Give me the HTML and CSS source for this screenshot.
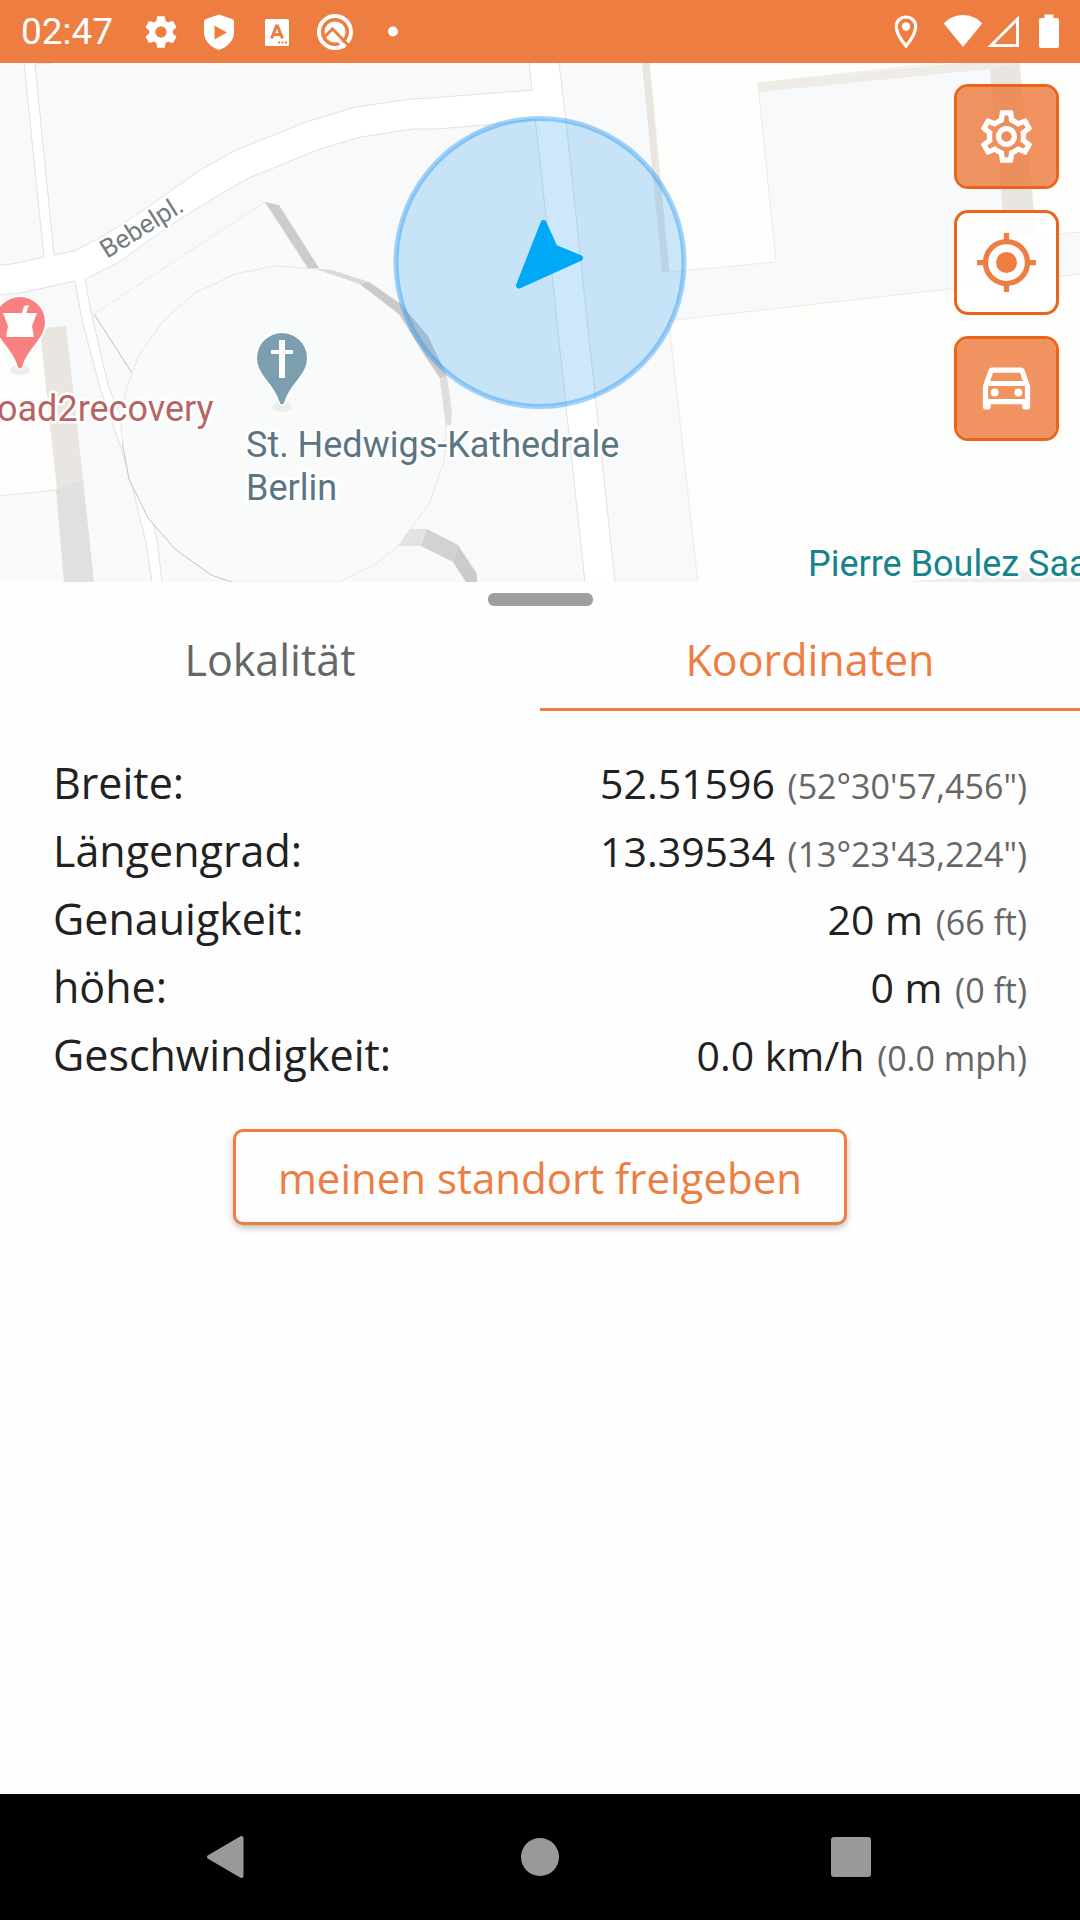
FILE: index.html
```html
<!DOCTYPE html>
<html lang="de">
<head>
    <meta charset="UTF-8">
    <meta name="viewport" content="width=device-width, initial-scale=1.0">
    <title>Koordinaten</title>
    <link rel="stylesheet" href="styles.css">
</head>
<body>
    <div class="status-bar">
        <span class="time">02:47</span>
        <div class="notifications">
            <svg width="38" height="38" viewBox="0 0 24 24"><path fill="#fff" fill-rule="evenodd" d="M19.43 12.98c.04-.32.07-.64.07-.98s-.03-.66-.07-.98l2.11-1.65c.19-.15.24-.42.12-.64l-2-3.46c-.12-.22-.39-.3-.61-.22l-2.49 1c-.52-.4-1.08-.73-1.69-.98l-.38-2.65C14.46 2.18 14.25 2 14 2h-4c-.25 0-.46.18-.49.42l-.38 2.65c-.61.25-1.17.59-1.69.98l-2.49-1c-.23-.09-.49 0-.61.22l-2 3.46c-.13.22-.07.49.12.64l2.11 1.65c-.04.32-.07.65-.07.98s.03.66.07.98l-2.11 1.65c-.19.15-.24.42-.12.64l2 3.46c.12.22.39.3.61.22l2.49-1c.52.4 1.08.73 1.69.98l.38 2.65c.03.24.24.42.49.42h4c.25 0 .46-.18.49-.42l.38-2.65c.61-.25 1.17-.59 1.69-.98l2.49 1c.23.09.49 0 .61-.22l2-3.46c.12-.22.07-.49-.12-.64l-2.11-1.65zM12 15.6a3.6 3.6 0 1 1 0-7.2 3.6 3.6 0 0 1 0 7.2z"/></svg>
            <svg width="38" height="38" viewBox="0 0 38 38"><path fill="#fff" fill-rule="evenodd" d="M19 1.500 32 6q2 .7 2 2.500v11C34 28 27 34 19 37 11 34 4 28 4 19.500v-11Q4 6.700 6 6zM14.500 12.500v14l12.500-7z"/></svg>
            <svg width="38" height="38" viewBox="0 0 38 38"><rect x="7" y="6" width="24" height="27" rx="1.500" fill="#fff"/><path fill="none" stroke="#ed7d41" stroke-width="3" d="m13.500 25.500 5-12.500h1l5 12.500M15.500 21.500h7"/><path fill="#ed7d41" d="M20 28.500h2v2h-2zm3.500 0h2v2h-2zm3.500 0h2v2h-2z"/></svg>
            <svg width="38" height="38" viewBox="0 0 38 38"><circle cx="19" cy="19" r="16" fill="none" stroke="#fff" stroke-width="4"/><circle cx="19" cy="19" r="10.500" fill="#fff"/><path fill="none" stroke="#ed7d41" stroke-width="3" d="M9 23.500l7.500-7.500L36 36"/><path fill="none" stroke="#fff" stroke-width="3.500" d="M15.500 19.500 29 34.500"/></svg>
            <svg width="38" height="38" viewBox="0 0 38 38"><circle cx="19" cy="18.500" r="5" fill="#fff"/></svg>
        </div>
        <div class="signals">
            <svg width="34" height="38" viewBox="-5 0 34 38"><path fill="none" stroke="#fff" stroke-width="3.200" d="M12 4C6.500 4 2.300 8.200 2.300 13.500 2.300 20 7 27 12 33c5-6 9.700-13 9.700-19.500C21.700 8.200 17.500 4 12 4z"/><circle cx="12" cy="13.500" r="4.200" fill="#fff"/></svg>
            <div class="network">
                <svg width="40" height="38" viewBox="0 0 40 38"><path fill="#fff" d="M20 34 .8 10.500C11-1 29-1 39.200 10.500z"/></svg>
                <svg width="32" height="38" viewBox="0 0 32 38"><path fill="none" stroke="#fff" stroke-width="3" d="M30.500 6v26.500H4z"/></svg>
            </div>
            <svg width="20" height="38" viewBox="0 0 20 38"><path fill="#fff" d="M5.500 1.500h9V5H18q2 0 2 2v26q0 2-2 2H2q-2 0-2-2V7q0-2 2-2h3.500z"/></svg>
        </div>
    </div>

    <div class="map">
        <svg class="map-canvas" viewBox="0 0 1080 519" preserveAspectRatio="xMidYMid slice">
            <rect width="1080" height="519" fill="#f8f9fb"/>
            <!-- buildings, left -->
            <path fill="#fdfdfb" d="M0 270 46 265 57 426 0 433z"/>
            <path fill="#f9fbfa" d="M0 433 57 426 64 519H0z"/>
            <path fill="none" stroke="#e8e3de" d="M0 433 57 427"/>
            <path fill="#e9e6e1" d="M41 278 46 265 66 263 83 416 57 427z"/>
            <path fill="#dfe1e0" d="M56 427 83 416 94 519H64z"/>
            <!-- buildings, right -->
            <path fill="#fdfdfb" stroke="#f0e9e2" d="M649-2H960L758 20 776 199 669 209z"/>
            <path fill="#fdfdfb" stroke="#f0e9e2" d="M1019-2H1082V169L1036 173zM1082 211 674 257 669 259 698 521H1082z"/>
            <path fill="#e9e6e1" d="M642 0H649L669 209H662zM990 6 1019 0 1036 173H1005z"/>
            <path fill="#efece8" d="M758 20 960 0H1019L990 6 759 29z"/>
            <path fill="#f1eeea" d="M905 519 1022 508 1080 514V519z"/>
            <!-- streets -->
            <g fill="#fff">
                <path d="M24 0 44 196 54 194 35 0z"/>
                <path d="M0 202 12 201 44 194 54 192 74 188 103 173 138 151 200 107 236 87 306 59 355 44 412 36 430 35 532 27 529 0H559L566 58 615 519H585L566 344 540 97 535 56 496 61 437 66 413 66 361 74 320 86 249 115 219 132 172 161 119 199 85 216 75 218 21 230 0 232z"/>
                <path d="M75 216 82 257 100 325 119 379 133 426 146 480 152 519H162L157 477 145 426 129 374 108 322 91 249 85 214z"/>
            </g>
            <g fill="none" stroke="#e1e1e6">
                <path d="M24 0 44 194 12 201 0 202M559 0 566 58 615 519M529 0 532 27 430 35 412 36 355 44 306 59 236 87 200 107 138 151 103 173 74 188 54 192 35 1 51 0"/>
                <path d="M0 232 21 230 75 218 82 257 100 325 119 379 133 426 146 480 152 519M162 519 157 477 145 426 129 374 108 322 91 249 85 216 119 199 172 161 219 132 249 115 320 86 361 74 413 66 437 66 496 61 535 56 540 97 566 344 585 519"/>
            </g>
            <!-- cathedral -->
            <path fill="#f9fbfa" stroke="#e9ebea" d="M94 251 265 139 308 205 132 310z"/>
            <path fill="none" stroke="#c4c6c5" d="M94 251 132 310"/>
            <path fill="#f9fbfa" stroke="#e6e8e7" d="M275 203 317 206 360 221 399 251 427 296 440 315 446 362 444 399 429 441 408 469 398 483 374 502 338 519H232L211 512 175 486 148 455 129 416 121 369 124 335 132 310 139 292 164 257 195 230 235 211z"/>
            <path fill="none" stroke="#c8caca" d="M122 380 129 416 148 455 175 486 211 512 232 519"/>
            <path fill="#cbcdcc" d="M265 139 279 142 319 205H308z"/>
            <path fill="#d8dad9" d="M308 205 332 207 369 219 360 221 317 206z"/>
            <path fill="#cacaca" d="M360 221 369 219 401 241 428 273 447 313 440 315 427 296 399 251z"/>
            <path fill="#dedede" d="M440 315 447 313 452 349 451 362H446z"/>
            <path fill="#e3e3e3" d="M410 466H427L421 483H398z"/>
            <path fill="#d2d2d2" d="M427 466 458 482 453 499 421 483z"/>
            <path fill="#cacccb" d="M458 482 477 511V519H466L453 499z"/>
            <!-- own position -->
            <circle cx="540" cy="199.500" r="144" fill="#058cf0" fill-opacity=".2" stroke="#2196f3" stroke-opacity=".42" stroke-width="5"/>
            <path fill="#00a8f5" stroke="#00a8f5" stroke-width="6" stroke-linejoin="round" d="M543.500 160 554.500 184.500 580 195 519 222.500z"/>
            <!-- pins -->
            <ellipse cx="20" cy="307" rx="10" ry="5" fill="#ededee"/>
            <path fill="#f98080" stroke="#fff" stroke-width="3" paint-order="stroke" d="M20 234a25 25 0 0 1 25 25C45 276 28 284 22 304q-2 3-4 0C12 284-5 276-5 259A25 25 0 0 1 20 234z"/>
            <path fill="#fff" d="M3 250H22L24 243 29 242 26 250H37L32 263 34 274H6L8 263z"/>
            <ellipse cx="282" cy="344" rx="10" ry="5" fill="#ededee"/>
            <path fill="#7c9fb0" stroke="#fff" stroke-width="3" paint-order="stroke" d="M282 270a25 25 0 0 1 25 25C307 312 290 320 284 340q-2 3-4 0C274 320 257 312 257 295A25 25 0 0 1 282 270z"/>
            <path fill="#fff" d="M279 277h6v10h8v4h-8v24h-6v-24h-8v-4h8z"/>
            <text class="label street" transform="translate(107 196) rotate(-32)">Bebelpl.</text>
            <text class="label health" x="-3" y="358">oad2recovery</text>
            <text class="label church" x="246" y="394">St. Hedwigs-Kathedrale</text>
            <text class="label church" x="246" y="437">Berlin</text>
            <text class="label culture" x="808" y="513">Pierre Boulez Saa</text>
        </svg>
        <div class="map-buttons">
            <button class="map-button" aria-label="Einstellungen">
                <svg width="63" height="63" viewBox="0 0 24 24" fill="currentColor"><path d="M19.43 12.98c.04-.32.07-.64.07-.98s-.03-.66-.07-.98l2.11-1.650c.19-.15.24-.42.12-.64l-2-3.460c-.09-.16-.26-.25-.44-.25-.06 0-.12.01-.17.03l-2.490 1c-.52-.4-1.080-.73-1.690-.98l-.38-2.650C14.460 2.180 14.250 2 14 2h-4c-.25 0-.46.18-.49.42l-.38 2.650c-.61.25-1.170.59-1.690.98l-2.490-1c-.06-.02-.12-.03-.18-.03-.17 0-.34.09-.43.25l-2 3.460c-.13.22-.07.49.12.64l2.110 1.650c-.04.32-.07.65-.07.98s.03.66.07.98l-2.110 1.650c-.19.15-.24.42-.12.64l2 3.460c.09.16.26.25.44.25.06 0 .12-.01.17-.03l2.490-1c.52.4 1.080.73 1.690.98l.38 2.650c.03.24.24.42.49.42h4c.25 0 .46-.18.49-.42l.38-2.650c.61-.25 1.170-.59 1.690-.98l2.490 1c.06.02.12.03.18.03.17 0 .34-.09.43-.25l2-3.460c.12-.22.07-.49-.12-.64l-2.110-1.650zm-1.980-1.710c.04.31.05.52.05.73s-.02.43-.05.73l-.14 1.130.89.7 1.080.84-.7 1.210-1.270-.51-1.040-.42-.9.68c-.43.32-.84.56-1.250.73l-1.060.43-.16 1.130-.2 1.350h-1.400l-.19-1.350-.16-1.130-1.060-.43c-.43-.18-.83-.41-1.230-.71l-.91-.7-1.060.43-1.270.51-.7-1.210 1.080-.84.89-.7-.14-1.130c-.03-.31-.05-.54-.05-.74s.02-.43.05-.73l.14-1.130-.89-.7-1.080-.84.7-1.210 1.270.51 1.040.42.9-.68c.43-.32.84-.56 1.250-.73l1.060-.43.16-1.130.2-1.350h1.390l.19 1.350.16 1.130 1.060.43c.43.18.83.41 1.230.71l.91.7 1.060-.43 1.270-.51.7 1.210-1.070.85-.89.7.14 1.130zM12 8c-2.210 0-4 1.790-4 4s1.790 4 4 4 4-1.790 4-4-1.790-4-4-4zm0 6c-1.100 0-2-.9-2-2s.9-2 2-2 2 .9 2 2-.9 2-2 2z"/></svg>
            </button>
            <button class="map-button light" aria-label="Mein Standort">
                <svg width="63" height="63" viewBox="0 0 24 24" fill="none" stroke="currentColor" stroke-width="2"><circle cx="12" cy="12" r="8"/><circle cx="12" cy="12" r="4" fill="currentColor" stroke="none"/><path d="M12 .8V4M12 20v3.200M.8 12H4M20 12h3.200"/></svg>
            </button>
            <button class="map-button" aria-label="Verkehr">
                <svg width="63" height="63" viewBox="0 0 24 24" fill="currentColor"><path d="M18.920 5.010C18.720 4.420 18.160 4 17.500 4h-11c-.66 0-1.210.42-1.420 1.010L3 11v8c0 .55.45 1 1 1h1c.55 0 1-.45 1-1v-1h12v1c0 .55.45 1 1 1h1c.55 0 1-.45 1-1v-8l-2.080-5.990zM6.850 6h10.290l1.080 3.110H5.770L6.850 6zM19 16H5v-5h14v5z"/><circle cx="7.500" cy="13.500" r="1.500"/><circle cx="16.500" cy="13.500" r="1.500"/></svg>
            </button>
        </div>
    </div>

    <div class="sheet">
        <div class="handle"></div>
        <div class="tabs" role="tablist">
            <button class="tab" role="tab" aria-selected="false">Lokalität</button>
            <button class="tab active" role="tab" aria-selected="true">Koordinaten</button>
        </div>
        <dl class="data">
            <div class="row">
                <dt>Breite:</dt>
                <dd>52.51596 <small>(52°30'57,456")</small></dd>
            </div>
            <div class="row">
                <dt>Längengrad:</dt>
                <dd>13.39534 <small>(13°23'43,224")</small></dd>
            </div>
            <div class="row">
                <dt>Genauigkeit:</dt>
                <dd>20 m <small>(66 ft)</small></dd>
            </div>
            <div class="row">
                <dt>höhe:</dt>
                <dd>0 m <small>(0 ft)</small></dd>
            </div>
            <div class="row">
                <dt>Geschwindigkeit:</dt>
                <dd>0.0 km/h <small>(0.0 mph)</small></dd>
            </div>
        </dl>
        <button class="share">meinen standort freigeben</button>
    </div>

    <div class="nav-bar">
        <button class="nav-button" aria-label="Zurück">
            <svg width="46" height="46" viewBox="0 0 46 46"><path fill="#999" stroke="#999" stroke-width="4" stroke-linejoin="round" d="M35.500 4v38L3 23z"/></svg>
        </button>
        <button class="nav-button" aria-label="Startseite">
            <svg width="46" height="46" viewBox="0 0 46 46"><circle cx="23" cy="23" r="19" fill="#999"/></svg>
        </button>
        <button class="nav-button" aria-label="Übersicht">
            <svg width="46" height="46" viewBox="0 0 46 46"><rect x="3" y="3" width="40" height="40" rx="3" fill="#999"/></svg>
        </button>
    </div>
</body>
</html>
```
FILE: styles.css
```css
* {
    box-sizing: border-box;
}

body {
    font-family: "Open Sans", "Noto Sans", sans-serif;
    margin: 0;
    min-height: 100vh;
    background-color: #fefefe;
    color: #212121;
    display: flex;
    flex-direction: column;
}

svg {
    display: block;
}

button {
    font: inherit;
    margin: 0;
    padding: 0;
    border: none;
    background: none;
    cursor: pointer;
}

.status-bar {
    display: flex;
    align-items: center;
    height: 63px;
    padding: 0 21px;
    background-color: #ed7d41;
    color: white;
}

.time {
    font-family: Roboto, sans-serif;
    font-size: 37px;
    width: 121px;
}

.notifications {
    display: flex;
    gap: 20px;
}

.signals {
    display: flex;
    gap: 20px;
    margin-left: auto;
}

.network {
    display: flex;
    gap: 4px;
}

.map {
    position: relative;
    height: 519px;
    overflow: hidden;
}

.map-canvas {
    width: 100%;
    height: 100%;
}

.label {
    font-family: Roboto, sans-serif;
    font-size: 36px;
    stroke: white;
    stroke-width: 5px;
    stroke-linejoin: round;
    paint-order: stroke;
}

.street {
    font-size: 26px;
    fill: #757c80;
}

.health {
    fill: #b96464;
}

.church {
    fill: #5b7582;
}

.culture {
    fill: #15858b;
}

.map-buttons {
    position: absolute;
    top: 21px;
    right: 21px;
    display: flex;
    flex-direction: column;
    gap: 21px;
}

.map-button {
    display: flex;
    align-items: center;
    justify-content: center;
    width: 105px;
    height: 105px;
    border: 3px solid #ea651b;
    border-radius: 14px;
    background-color: rgba(237, 125, 65, 0.83);
    background-clip: padding-box;
    color: white;
}

.map-button.light {
    background-color: rgba(255, 255, 255, 0.85);
    color: #ed7d41;
}

.sheet {
    flex-grow: 1;
    display: flex;
    flex-direction: column;
    align-items: center;
    padding-top: 11px;
}

.handle {
    width: 105px;
    height: 13px;
    border-radius: 6px;
    background-color: #9e9e9e;
}

.tabs {
    display: flex;
    width: 100%;
    height: 105px;
}

.tab {
    flex: 1;
    padding-top: 4px;
    border-bottom: 3px solid transparent;
    font-size: 43px;
    color: #666;
}

.tab.active {
    border-color: #ed7d41;
    color: #ed7d41;
}

.data {
    width: 100%;
    margin: 0;
    padding: 38px 53px 0;
    font-size: 43px;
    line-height: 68px;
}

.row {
    display: flex;
    justify-content: space-between;
    align-items: baseline;
}

dd {
    margin: 0;
    font-size: 41px;
}

small {
    margin-left: 2px;
    font-size: 34px;
    line-height: 1;
    color: #666;
}

.share {
    height: 96px;
    margin-top: 40px;
    padding: 0 42px;
    border: 3px solid #ed7d41;
    border-radius: 10px;
    background-color: #fefefe;
    box-shadow: 0 3px 6px rgba(0, 0, 0, 0.25);
    font-size: 42px;
    color: #ed7d41;
}

.nav-bar {
    display: flex;
    height: 126px;
    padding: 0 73px;
    background-color: black;
}

.nav-button {
    flex: 1;
    display: flex;
    align-items: center;
    justify-content: center;
}
```
